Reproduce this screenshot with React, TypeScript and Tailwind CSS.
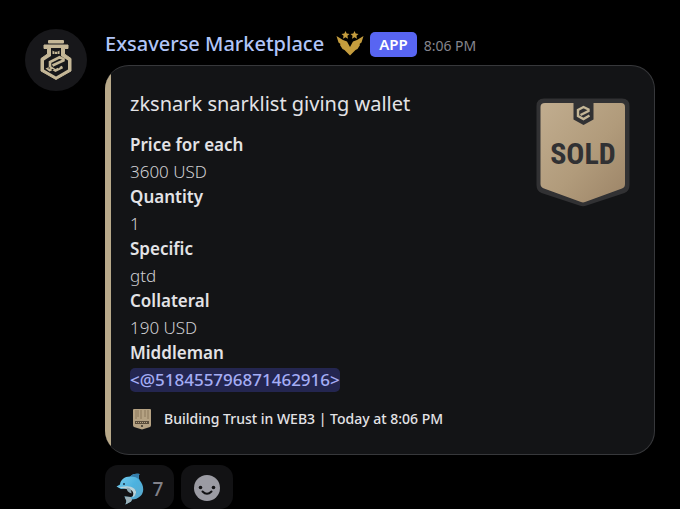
import React from 'react';

interface Field {
  name: string;
  value: string;
  mention?: boolean;
}

const fields: Field[] = [
  { name: 'Price for each', value: '3600 USD' },
  { name: 'Quantity', value: '1' },
  { name: 'Specific', value: 'gtd' },
  { name: 'Collateral', value: '190 USD' },
  { name: 'Middleman', value: '<@518455796871462916>', mention: true },
];

const JarLogo: React.FC = () => (
  <svg viewBox="0 0 62 62" className="h-full w-full" aria-hidden="true">
    <rect x="23" y="11" width="16" height="3.500" rx="1" fill="#c5b797" />
    <path
      d="M19 16h24v3.500h-3.500V25l6.500 4.500V42L31 50.500 16 42V29.500l6.500-4.500v-5.500H19z"
      fill="#c5b797"
      stroke="#c5b797"
      strokeLinejoin="round"
    />
    <path d="M26 19h10v8l7 4.500v9L31 47.500l-12-7v-9l7-4.500z" fill="#17171a" />
    <path d="M27.500 21.500l2 1.300h3l2-1.300v3.500h-7z" fill="#c5b797" />
    <path d="M29 24h1M32 24h1" stroke="#17171a" />
    <path
      d="M27.500 36.500l11-5v-1.500l-4-1.700-9.500 4.700v5l5.500 3.500 7-3.500"
      fill="none"
      stroke="#c5b797"
      strokeWidth="2.600"
    />
    <path d="M20.500 39.500l3.500-1.500 3 3.500-2.500 1z" fill="#c5b797" />
    <path d="M23.500 39h1.500M27 40.500h1.500M33 39l1.500-1" stroke="#17171a" strokeWidth="1.200" />
  </svg>
);

const RoleIcon: React.FC = () => (
  <svg viewBox="0 0 28 26" className="h-[26px] w-7 shrink-0" role="img" aria-label="Role icon">
    <g fill="#c59d3e">
      <path d="M9.500 0l1.200 2.600 2.800.3-2.100 1.900.6 2.900L9.500 6.200 7 7.700l.6-2.900L5.500 2.900l2.800-.3zM18.500 0l1.200 2.600 2.800.3-2.100 1.900.6 2.900-2.500-1.500L16 7.700l.6-2.900-2.100-1.900 2.800-.3z" />
      <path d="M.5 5l6.500 4 4 1.500 3 5.500 3-5.500L21 9l6.500-4-2 6.500-2 1.500.5 1-2.500 4-2 1L14 24.500 8.500 19l-2-1L4 14l.5-1-2-1.500z" />
    </g>
  </svg>
);

const SoldBadge: React.FC = () => (
  <svg viewBox="0 0 94 109" className="h-[109px] w-[94px] shrink-0" role="img" aria-label="Sold">
    <defs>
      <linearGradient id="tan" x1="0" y1="0" x2="1" y2="1">
        <stop offset="0" stopColor="#c1ad8f" />
        <stop offset=".55" stopColor="#b19b7b" />
        <stop offset="1" stopColor="#9c8467" />
      </linearGradient>
    </defs>
    <path
      d="M8 .5h78q7.500 0 7.500 7.500v79q0 6-5 8l-38 12.500q-3.500 1.500-7 0L5.500 95q-5-2-5-8V8Q.5.500 8 .5z"
      fill="#313133"
    />
    <path
      d="M9 5h76q4 0 4 4v77q0 3.500-3 4.500l-37 13.500q-2 .8-4 0L8 90.500q-3.500-1.500-3.500-4.500V9q0-4 4.500-4z"
      fill="url(#tan)"
    />
    <path d="M37.500 4h20v17.500l-10 5.500-10-5.500z" fill="#313133" />
    <path
      d="M44.500 17l8-4v-1.500l-5-2.500-5.500 3v6l5.500 3 6-3.500"
      fill="none"
      stroke="#c5b797"
      strokeWidth="2.400"
    />
    <text
      x="47"
      y="66"
      textAnchor="middle"
      fill="#313133"
      className="font-['Roboto_Condensed','Open_Sans_Condensed','DejaVu_Sans_Condensed',sans-serif] text-[30px] font-bold"
    >
      SOLD
    </text>
  </svg>
);

const FooterIcon: React.FC = () => (
  <svg viewBox="0 0 20 22" className="h-[22px] w-5 shrink-0" aria-hidden="true">
    <path d="M2 1h16q1 0 1 1v15q0 1.500-1 2l-8 2.500L2 19q-1-.5-1-2V2q0-1 1-1z" fill="#b5a283" />
    <path d="M4 2v9M6 2v7M9 2v9M13 2v7M16 2v9" stroke="#8b795d" strokeWidth="1" />
    <path d="M3 13h14v3H3z" fill="#5b4e3c" />
    <path d="M4 14.500h12" stroke="#b5a283" strokeDasharray="1 1" />
    <circle cx="10" cy="18" r="1" fill="#3a332a" />
  </svg>
);

const Dolphin: React.FC = () => (
  <svg viewBox="0 0 28 32" className="h-8 w-7 shrink-0" aria-hidden="true">
    <defs>
      <linearGradient id="skin" x1="0" y1="0" x2="1" y2="1">
        <stop offset="0" stopColor="#7dd0ee" />
        <stop offset=".5" stopColor="#4cb2df" />
        <stop offset="1" stopColor="#5fa5c4" />
      </linearGradient>
    </defs>
    <path
      d="M.5 13.500l3.500-2C4.500 7 8.500 3.500 14 3.500c2-2 5-3.500 9.500-2.500-1 2-1 4 0 6 4.500 5 5 12 1 16-2.500 2.500-5.500 3.500-8.500 3.500l-1 2-5.500 3 1-3.500-2-4.500 6 .5c3-.5 5-2 5.500-4.500.5-3-3-5-7-4.500-3 0-5 1-8 1z"
      fill="url(#skin)"
    />
    <path d="M14 3.500c2-2 5-3.500 9.500-2.500-1 2-1 4 0 6-2-2.500-5-3.500-9.500-3.500z" fill="#347eac" />
    <path
      d="M2 14.500c4-.500 6-2 11-1 5 .5 8.500 4 6.500 8-.5 1.500-2 2.500-3.500 3 2-3 2-6.500-2-8-4-1-7-1-12-2z"
      fill="#b9d3da"
    />
    <path d="M10.500 14.500c0 3 1.500 5 5 6 0-2-.5-3.500-2-5.500z" fill="#8fa9b3" />
    <path d="M8.500 23.500l6 .5 1.500 2.500-1 2-5.500 3 1-3.500z" fill="#9db1b8" />
    <circle cx="8" cy="11" r="1" fill="#173347" />
  </svg>
);

const Smiley: React.FC = () => (
  <svg viewBox="0 0 26 26" className="h-[26px] w-[26px]" aria-hidden="true">
    <circle cx="13" cy="13" r="13" fill="#9b9ba3" />
    <circle cx="6.500" cy="12.500" r="1.800" fill="#121214" />
    <circle cx="19.500" cy="12.500" r="1.800" fill="#121214" />
    <path d="M8.500 16.500q4.500 4.500 9 0" fill="none" stroke="#121214" strokeWidth="2" strokeLinecap="round" />
  </svg>
);

const App: React.FC = () => (
  <main className="min-h-screen bg-black font-['Noto_Sans',sans-serif] text-[#e3e3e6]">
    <article className="flex gap-[18px] pt-[29px] pr-[25px] pl-[25px]">
      <div className="h-[62px] w-[62px] shrink-0 overflow-hidden rounded-full bg-[#17171a]">
        <JarLogo />
      </div>

      <div className="min-w-0 flex-1">
        <header className="flex h-9 items-start">
          <h1 className="text-[20px] leading-[30px] font-medium text-[#b1c5f8]">Exsaverse Marketplace</h1>
          <div className="ml-3 flex h-[30px] items-center">
            <RoleIcon />
            <span className="ml-[6px] flex h-[25px] items-center rounded-[5px] bg-[#5865f2] px-[9px] text-[15px] font-semibold text-white">
              APP
            </span>
            <time className="ml-[7px] pt-1 text-[14px] leading-5 text-[#85858d]">8:06 PM</time>
          </div>
        </header>

        <section className="flex overflow-hidden rounded-[24px] border border-l-0 border-[#37383b] bg-[#131416]">
          <div className="w-[6px] shrink-0 bg-[#b8a98a]" />
          <div className="min-w-0 flex-1 pt-[23px] pr-6 pb-[23px] pl-[19px]">
            <div className="flex h-[43px] items-start justify-between">
              <h2 className="text-[20px] leading-[30px]">zksnark snarklist giving wallet</h2>
              <div className="pt-[9px]">
                <SoldBadge />
              </div>
            </div>

            <dl className="text-[17px]">
              {fields.map((field) => (
                <div key={field.name}>
                  <dt className="leading-[26px] font-semibold">{field.name}</dt>
                  <dd className="mt-[2px] leading-6 font-light text-[#d0d0d4]">
                    {field.mention ? (
                      <a
                        href="#middleman"
                        className="inline-block rounded-[5px] bg-[#242650] align-top leading-6 font-medium text-[#a4adf5]"
                      >
                        {field.value}
                      </a>
                    ) : (
                      field.value
                    )}
                  </dd>
                </div>
              ))}
            </dl>

            <footer className="mt-[15px] flex h-6 items-center gap-3 pl-[2px]">
              <FooterIcon />
              <span className="text-[14px] leading-6 font-medium">Building Trust in WEB3 | Today at 8:06 PM</span>
            </footer>
          </div>
        </section>

        <div className="mt-[10px] flex gap-[7px]">
          <button
            type="button"
            aria-label="Dolphin reaction, 7"
            className="flex h-11 w-[69px] items-center justify-center gap-[9px] rounded-[13px] bg-[#121214] pt-1"
          >
            <Dolphin />
            <span className="text-[19px] leading-6 font-medium text-[#818189]">7</span>
          </button>
          <button
            type="button"
            aria-label="Add reaction"
            className="flex h-11 w-[52px] items-center justify-center rounded-[13px] bg-[#121214] pt-[2px]"
          >
            <Smiley />
          </button>
        </div>
      </div>
    </article>
  </main>
);

export default App;
